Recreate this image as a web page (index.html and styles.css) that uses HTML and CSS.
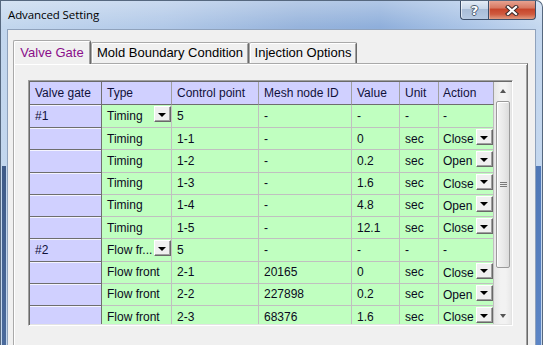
FILE: index.html
```html
<!DOCTYPE html>
<html>
<head>
<meta charset="utf-8">
<link rel="stylesheet" href="styles.css">
</head>
<body>
<div class="window">
  <div class="titlebar">
    <span class="title">Advanced Setting</span>
    <div class="caption-buttons">
      <div class="cap help"><span class="q">?</span></div>
      <div class="cap close">
        <svg width="14" height="11" viewBox="0 0 14 11">
          <path d="M3 2 L11 9 M11 2 L3 9" stroke="#3a2a2a" stroke-width="4.2" stroke-linecap="square" fill="none"/>
          <path d="M3 2 L11 9 M11 2 L3 9" stroke="#ffffff" stroke-width="2.2" stroke-linecap="square" fill="none"/>
        </svg>
      </div>
    </div>
  </div>
  <div class="client">
    <div class="tabs">
      <div class="tab selected tab-valve">Valve Gate</div>
      <div class="tab tab-mold">Mold Boundary Condition</div>
      <div class="tab tab-inj">Injection Options</div>
    </div>
    <div class="panel">
      <div class="gridwrap">
        <div class="grid">
          <div class="h">Valve gate</div><div class="h">Type</div><div class="h">Control point</div><div class="h">Mesh node ID</div><div class="h">Value</div><div class="h">Unit</div><div class="h act">Action</div>

          <div class="g">#1</div><div class="c dd-cell"><span>Timing</span><span class="dd"><i></i></span></div><div class="c">5</div><div class="c">-</div><div class="c">-</div><div class="c">-</div><div class="c act">-</div>

          <div class="g"></div><div class="c">Timing</div><div class="c">1-1</div><div class="c">-</div><div class="c">0</div><div class="c">sec</div><div class="c act dd-cell"><span>Close</span><span class="dd"><i></i></span></div>

          <div class="g"></div><div class="c">Timing</div><div class="c">1-2</div><div class="c">-</div><div class="c">0.2</div><div class="c">sec</div><div class="c act dd-cell"><span>Open</span><span class="dd"><i></i></span></div>

          <div class="g"></div><div class="c">Timing</div><div class="c">1-3</div><div class="c">-</div><div class="c">1.6</div><div class="c">sec</div><div class="c act dd-cell"><span>Close</span><span class="dd"><i></i></span></div>

          <div class="g"></div><div class="c">Timing</div><div class="c">1-4</div><div class="c">-</div><div class="c">4.8</div><div class="c">sec</div><div class="c act dd-cell"><span>Open</span><span class="dd"><i></i></span></div>

          <div class="g"></div><div class="c">Timing</div><div class="c">1-5</div><div class="c">-</div><div class="c">12.1</div><div class="c">sec</div><div class="c act dd-cell"><span>Close</span><span class="dd"><i></i></span></div>

          <div class="g">#2</div><div class="c dd-cell"><span>Flow fr...</span><span class="dd"><i></i></span></div><div class="c">5</div><div class="c">-</div><div class="c">-</div><div class="c">-</div><div class="c act">-</div>

          <div class="g"></div><div class="c">Flow front</div><div class="c">2-1</div><div class="c">20165</div><div class="c">0</div><div class="c">sec</div><div class="c act dd-cell"><span>Close</span><span class="dd"><i></i></span></div>

          <div class="g"></div><div class="c">Flow front</div><div class="c">2-2</div><div class="c">227898</div><div class="c">0.2</div><div class="c">sec</div><div class="c act dd-cell"><span>Open</span><span class="dd"><i></i></span></div>

          <div class="g"></div><div class="c">Flow front</div><div class="c">2-3</div><div class="c">68376</div><div class="c">1.6</div><div class="c">sec</div><div class="c act dd-cell"><span>Close</span><span class="dd"><i></i></span></div>
        </div>
        <div class="vscroll">
          <div class="sbtn"><i class="up"></i></div>
          <div class="track">
            <div class="thumb"><span class="grip"></span></div>
          </div>
          <div class="sbtn"><i class="down"></i></div>
        </div>
      </div>
    </div>
  </div>
</div>
</body>
</html>
```

FILE: styles.css
```css
* { box-sizing: border-box; }
html, body { margin: 0; padding: 0; }
body {
  width: 543px;
  height: 345px;
  overflow: hidden;
  background: #ffffff;
  font-family: "Liberation Sans", Arial, sans-serif;
}

.window {
  width: 543px;
  height: 345px;
  overflow: hidden;
  border: 1px solid #56687f;
  border-bottom: none;
  border-top-right-radius: 7px;
  padding: 0 6px;
  background:
    linear-gradient(#3f5b88, #4a6a9c) 1px 165px / 4px 180px no-repeat,
    linear-gradient(#4f77b6, #5d86c6) 535px 165px / 5px 180px no-repeat,
    linear-gradient(to bottom, rgba(255,255,255,0.30), rgba(255,255,255,0) 26px),
    linear-gradient(to right, #c3d7ee 0%, #b2c9e8 30%, #97b4dc 55%, #8fafdb 70%, #aec7e8 88%, #c5d8ef 100%);
}

.titlebar {
  height: 28px;
  display: flex;
  justify-content: space-between;
  align-items: flex-start;
}
.title {
  font-family: "Open Sans", "Noto Sans", sans-serif;
  font-size: 11.5px;
  color: #000;
  padding-left: 1px;
  line-height: 28px;
  letter-spacing: -0.1px;
}
.caption-buttons {
  display: flex;
  margin-top: -1px;
}
.cap {
  height: 20px;
  display: flex;
  align-items: center;
  justify-content: center;
  border: 1px solid #3d4f6a;
  border-top: none;
}
.help {
  width: 28px;
  border-right: none;
  border-bottom-left-radius: 4px;
  background: linear-gradient(to bottom, #e6eef8 0%, #c8d7ea 45%, #a9bdd8 50%, #b6c9e2 100%);
  box-shadow: inset 1px 0 rgba(255,255,255,0.6);
}
.help .q {
  font-family: "DejaVu Sans", sans-serif;
  font-weight: bold;
  font-size: 13px;
  color: #ffffff;
  text-shadow: 1px 0 #4a5a70, -1px 0 #4a5a70, 0 1px #4a5a70, 0 -1px #4a5a70;
  margin-top: 1px;
}
.close {
  width: 48px;
  border-bottom-right-radius: 4px;
  background: linear-gradient(to bottom, #e9a897 0%, #d87a63 40%, #c7462c 50%, #cf5a3f 75%, #e09a80 100%);
  box-shadow: inset 1px 1px rgba(255,220,210,0.5);
}
.close svg { display: block; margin-top: 1px; }

.client {
  height: 317px;
  overflow: hidden;
  background: #f0f0f0;
  border: 1px solid #8fa2bc;
  border-bottom: none;
}

.tabs {
  display: flex;
  align-items: flex-end;
  height: 23px;
  margin: 10px 0 0 5px;
}
.tab {
  height: 21px;
  font-size: 13px;
  color: #000;
  display: flex;
  align-items: center;
  justify-content: center;
  white-space: nowrap;
  padding-bottom: 2px;
  border-top: 1px solid #a9a9a9;
  border-left: 1px solid #a9a9a9;
  border-right: 1px solid #696969;
  border-top-left-radius: 2px;
  border-top-right-radius: 2px;
  box-shadow: inset 1px 1px #ffffff, inset -1px 0 #a0a0a0;
  background: #f0f0f0;
}
.tab.selected {
  height: 24px;
  margin-bottom: -1px;
  position: relative;
  z-index: 1;
  color: #8a0e8a;
  padding-bottom: 1px;
}
.tab-valve { width: 78px; }
.tab-mold { width: 158px; }
.tab-inj { width: 108px; }

.panel {
  margin-left: 5px;
  width: 515px;
  height: 300px;
  border: 1px solid;
  border-color: #a9a9a9 #696969 #696969 #a9a9a9;
  box-shadow: inset 1px 1px #ffffff, inset -1px -1px #a0a0a0;
  padding: 16px 0 0 14px;
}

.gridwrap {
  display: flex;
  width: 485px;
  height: 246px;
  border: 1px solid;
  border-color: #a0a0a0 #ffffff #ffffff #a0a0a0;
  padding: 1px;
  box-shadow: inset 1px 1px #696969, inset -1px -1px #e3e3e3;
}

.grid {
  display: grid;
  grid-template-columns: 72px 70px 87px 93px 48px 39px 55px;
  grid-template-rows: 23px 23px repeat(9, 22.25px);
  height: 242px;
  overflow: hidden;
  font-size: 12px;
  color: #0a0a20;
}
.grid > div {
  display: flex;
  align-items: center;
  padding-left: 5px;
  white-space: nowrap;
  overflow: hidden;
}
.h {
  background: #d0d0ff;
  border-right: 1px solid #a0a0a0;
  border-bottom: 1px solid #6e6e6e;
  color: #10103a;
}
.h:first-child { border-right-color: #707070; }
.g {
  background: #d0d0ff;
  border-right: 1px solid #707070;
  border-bottom: 1px solid #6e6e6e;
  box-shadow: inset 0 1px #f4f4ff;
  color: #10103a;
}
.c {
  background: #c0ffc0;
  border-right: 1px solid #c0c0c0;
  border-bottom: 1px solid #c0c0c0;
}
.grid > .act { padding-left: 4px; }
.grid > .dd-cell {
  justify-content: space-between;
  align-items: flex-start;
}
.dd-cell > span:first-child { margin-top: 4px; }

.dd {
  width: 17px;
  height: 16px;
  margin-top: 1px;
  flex: none;
  display: flex;
  align-items: center;
  justify-content: center;
  background: #f0f0f0;
  border: 1px solid;
  border-color: #ffffff #696969 #696969 #ffffff;
  box-shadow: inset -1px -1px #a0a0a0;
}
.dd i {
  display: block;
  width: 0;
  height: 0;
  border-left: 4px solid transparent;
  border-right: 4px solid transparent;
  border-top: 4px solid #000;
  margin: 1px 1px 0 0;
}

.vscroll {
  width: 17px;
  height: 242px;
  display: flex;
  flex-direction: column;
  background: linear-gradient(to right, #e6e6e6, #f2f2f2 40%, #f2f2f2 70%, #e8e8e8);
}
.sbtn {
  height: 17px;
  flex: none;
  display: flex;
  align-items: center;
  justify-content: center;
}
.sbtn i {
  display: block;
  width: 0;
  height: 0;
  border-left: 3.5px solid transparent;
  border-right: 3.5px solid transparent;
}
.sbtn .up { border-bottom: 4px solid #555; }
.sbtn .down { border-top: 4px solid #555; }
.track {
  flex: 1;
  padding: 2px 1px 0 2px;
}
.thumb {
  height: 167px;
  border: 1px solid #9a9a9a;
  border-radius: 2px;
  background: linear-gradient(to right, #f4f4f4, #eaeaea 50%, #dcdcdc);
  box-shadow: inset 1px 1px #ffffff;
  display: flex;
  align-items: center;
  justify-content: center;
}
.grip {
  display: block;
  width: 7px;
  height: 5px;
  background: repeating-linear-gradient(to bottom, #7a7a7a 0 1px, transparent 1px 2px);
}
```
